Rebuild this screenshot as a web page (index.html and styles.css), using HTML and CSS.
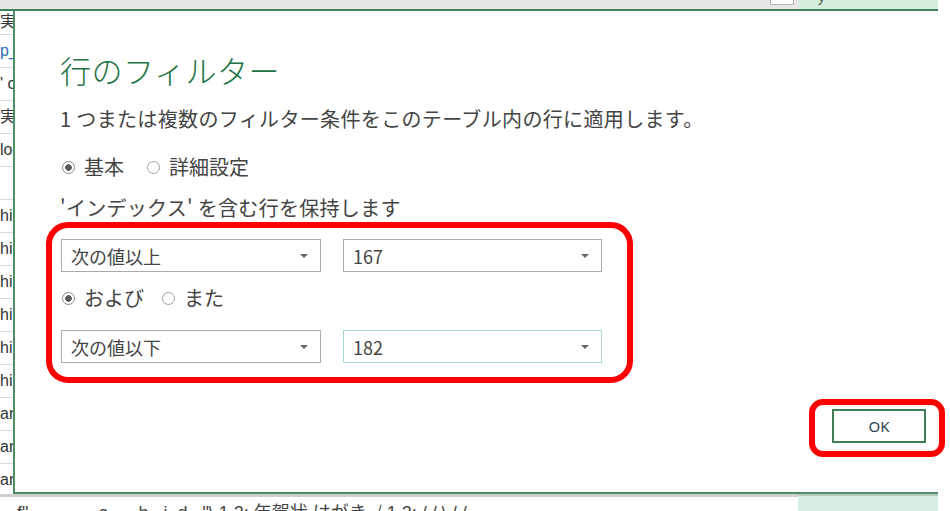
FILE: index.html
```html
<!DOCTYPE html>
<html lang="ja">
<head>
<meta charset="utf-8">
<title>行のフィルター</title>
<link rel="stylesheet" href="styles.css">
</head>
<body>
<div class="screen">
  <div class="topbar">
    <div class="tb-grey"><span class="tb-box"></span></div>
    <div class="tb-green"><span class="tb-glyph">y</span></div>
  </div>
  <div class="topline"></div>
  <div class="middle">
    <div class="sheet">
      <div class="cell first">実</div>
      <div class="cell link">p_</div>
      <div class="cell">' c</div>
      <div class="cell">実</div>
      <div class="cell">lo</div>
      <div class="cell"></div>
      <div class="cell">hi</div>
      <div class="cell">hi</div>
      <div class="cell">hi</div>
      <div class="cell">hi</div>
      <div class="cell">hi</div>
      <div class="cell">hi</div>
      <div class="cell">ar</div>
      <div class="cell">ar</div>
      <div class="cell">ar</div>
    </div>
    <div class="dialog">
      <h1 class="title">行のフィルター</h1>
      <p class="subtitle">1 つまたは複数のフィルター条件をこのテーブル内の行に適用します。</p>
      <div class="mode">
        <span class="radio checked"></span><span class="radio-label">基本</span>
        <span class="radio"></span><span class="radio-label">詳細設定</span>
      </div>
      <p class="label">'インデックス' を含む行を保持します</p>
      <div class="group">
        <div class="row">
          <div class="select op"><span>次の値以上</span><span class="caret"></span></div>
          <div class="select val"><span>167</span><span class="caret"></span></div>
        </div>
        <div class="conj">
          <span class="radio checked"></span><span class="radio-label">および</span>
          <span class="radio"></span><span class="radio-label">また</span>
        </div>
        <div class="row">
          <div class="select op"><span>次の値以下</span><span class="caret"></span></div>
          <div class="select val focus"><span>182</span><span class="caret"></span></div>
        </div>
      </div>
      <div class="okrow">
        <div class="okframe"><button class="ok">OK</button></div>
      </div>
    </div>
  </div>
  <div class="bottom">
    <div class="bt-left"><div class="bt-text">f"     ...      a      b   i  d   "\ 1 2: 年賀状 はがき √ 1 2: / / \ / /</div></div>
    <div class="bt-green"></div>
  </div>
</div>
</body>
</html>
```

FILE: styles.css
```css
html, body {
  margin: 0;
  padding: 0;
  background: #ffffff;
}

body {
  width: 950px;
  height: 511px;
  overflow: hidden;
  font-family: "Noto Sans CJK JP", "Noto Sans", sans-serif;
  color: #444444;
}

.screen {
  width: 950px;
  height: 511px;
  display: flex;
  flex-direction: column;
}

/* top strip of the spreadsheet behind */
.topbar {
  display: flex;
  height: 9px;
}

.tb-grey {
  width: 799px;
  background: #e7e7e7;
  display: flex;
  align-items: flex-start;
}

.tb-box {
  display: block;
  margin-left: 770px;
  width: 24px;
  height: 5px;
  background: #ffffff;
  border: 1px solid #b4b4b4;
  border-top: none;
  box-sizing: border-box;
}

.tb-green {
  width: 139px;
  background: #d3eedd;
  overflow: hidden;
  padding-left: 19px;
  box-sizing: border-box;
}

.tb-glyph {
  display: block;
  font-family: "Liberation Sans", sans-serif;
  font-size: 14px;
  line-height: 14px;
  margin-top: -10px;
  color: #555555;
}

.topline {
  width: 938px;
  height: 2px;
  background: #3f825c;
}

.middle {
  display: flex;
  height: 483px;
}

/* spreadsheet column visible at the left */
.sheet {
  width: 13px;
  overflow: hidden;
  flex: none;
}

.cell {
  height: 33px;
  box-sizing: border-box;
  border-bottom: 1px solid #d9d9d9;
  font-family: "Liberation Sans", "Noto Sans CJK JP", sans-serif;
  font-size: 16px;
  line-height: 32px;
  color: #333333;
  white-space: nowrap;
}

.cell.first {
  height: 24px;
  line-height: 22px;
}

.cell.link {
  color: #2d6fb7;
}

/* dialog */
.dialog {
  width: 925px;
  height: 483px;
  box-sizing: border-box;
  background: #ffffff;
  border-left: 2px solid #4f8f67;
  border-bottom: 2px solid #4f8f67;
  padding-left: 31px;
  flex: none;
}

.title {
  margin: 39px 0 0 14px;
  font-size: 31px;
  line-height: 40px;
  font-weight: 300;
  letter-spacing: 0.5px;
  color: #217346;
}

.subtitle {
  margin: 15px 0 0 14px;
  font-size: 20px;
  line-height: 28px;
  letter-spacing: 0.35px;
  color: #444444;
}

.mode {
  margin: 20px 0 0 16px;
  height: 28px;
  display: flex;
  align-items: center;
}

.radio {
  width: 13px;
  height: 13px;
  box-sizing: border-box;
  border: 1px solid #a0a0a0;
  border-radius: 50%;
  background: #ffffff;
  flex: none;
}

.radio.checked {
  border-color: #8a8a8a;
  background: radial-gradient(circle, #5a5a5a 0 3px, #ffffff 3.6px);
}

.radio-label {
  margin-left: 9px;
  margin-right: 23px;
  font-size: 20px;
  line-height: 28px;
  color: #444444;
}

.label {
  margin: 13px 0 0 14px;
  font-size: 20px;
  line-height: 28px;
  letter-spacing: 0.3px;
  color: #444444;
}

/* red annotation around the conditions */
.group {
  width: 587px;
  box-sizing: border-box;
  border: 6px solid #ff0000;
  border-radius: 22px;
  padding: 11px 25px 14px 9px;
}

.row {
  display: flex;
  gap: 22px;
}

.select {
  height: 33px;
  box-sizing: border-box;
  border: 1px solid #ababab;
  background: #ffffff;
  display: flex;
  align-items: center;
  justify-content: space-between;
  padding: 0 12px 0 9px;
  font-size: 18px;
  color: #444444;
}

.select.op {
  width: 260px;
}

.select.val {
  width: 259px;
}

.select.focus {
  border-color: #a9dcbf;
}

.caret {
  width: 0;
  height: 0;
  border-left: 4px solid transparent;
  border-right: 4px solid transparent;
  border-top: 4px solid #666666;
}

.conj {
  margin: 12px 0 18px 1px;
  height: 28px;
  display: flex;
  align-items: center;
}

.conj .radio-label {
  margin-right: 18px;
}

/* OK button */
.okrow {
  display: flex;
  justify-content: flex-end;
  margin-top: 16px;
  margin-right: -7px;
}

.okframe {
  border: 6px solid #ff0000;
  border-radius: 14px;
  padding: 4px 13px 8px 17px;
}

.ok {
  display: block;
  width: 94px;
  height: 34px;
  box-sizing: border-box;
  border: 2px solid #3f7d57;
  background: #ffffff;
  font-family: "Noto Sans", "Liberation Sans", sans-serif;
  font-size: 15px;
  color: #2f4350;
  padding: 0;
}

/* bottom strip of the spreadsheet behind */
.bottom {
  display: flex;
  height: 17px;
}

.bt-left {
  width: 798px;
  overflow: hidden;
  border-top: 3px solid #cfcfcf;
  box-sizing: border-box;
}

.bt-text {
  padding-left: 17px;
  padding-top: 4px;
  font-family: "Liberation Sans", "Noto Sans CJK JP", sans-serif;
  font-size: 18px;
  line-height: 24px;
  white-space: pre;
  color: #444444;
}

.bt-green {
  width: 140px;
  background: #d4efdf;
  border-top: 2px solid #b9cbbf;
  box-sizing: border-box;
}
```
